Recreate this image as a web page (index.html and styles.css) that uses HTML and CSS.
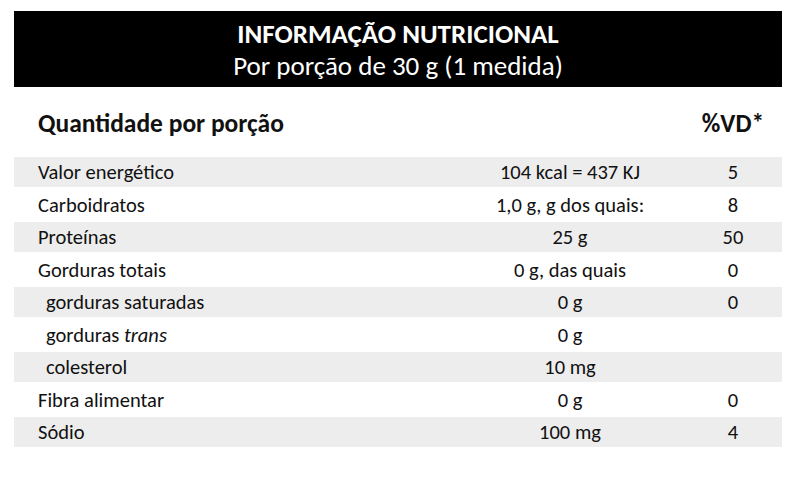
FILE: index.html
```html
<!DOCTYPE html>
<html lang="pt-BR">
<head>
<meta charset="utf-8">
<title>Informação Nutricional</title>
<link rel="stylesheet" href="styles.css">
</head>
<body>
<div class="page">
  <header class="banner">
    <div class="title">INFORMAÇÃO NUTRICIONAL</div>
    <div class="subtitle">Por porção de 30 g (1 medida)</div>
  </header>
  <div class="table">
    <div class="head label">Quantidade por porção</div>
    <div class="head value"></div>
    <div class="head vd">%VD*</div>

    <div class="cell label shade">Valor energético</div>
    <div class="cell value shade">104 kcal = 437 KJ</div>
    <div class="cell vd shade">5</div>

    <div class="cell label">Carboidratos</div>
    <div class="cell value">1,0 g, g dos quais:</div>
    <div class="cell vd">8</div>

    <div class="cell label shade">Proteínas</div>
    <div class="cell value shade">25 g</div>
    <div class="cell vd shade">50</div>

    <div class="cell label">Gorduras totais</div>
    <div class="cell value">0 g, das quais</div>
    <div class="cell vd">0</div>

    <div class="cell label sub shade">gorduras saturadas</div>
    <div class="cell value shade">0 g</div>
    <div class="cell vd shade">0</div>

    <div class="cell label sub"><span>gorduras <em>trans</em></span></div>
    <div class="cell value">0 g</div>
    <div class="cell vd"></div>

    <div class="cell label sub shade">colesterol</div>
    <div class="cell value shade">10 mg</div>
    <div class="cell vd shade"></div>

    <div class="cell label">Fibra alimentar</div>
    <div class="cell value">0 g</div>
    <div class="cell vd">0</div>

    <div class="cell label shade">Sódio</div>
    <div class="cell value shade">100 mg</div>
    <div class="cell vd shade">4</div>
  </div>
</div>
</body>
</html>
```

FILE: styles.css
```css
html, body {
  margin: 0;
  padding: 0;
  background: #ffffff;
}
body {
  font-family: "Carlito", "Liberation Sans Narrow", "Open Sans", sans-serif;
  color: #111111;
}
.page {
  width: 768px;
  padding: 11px 18px 0 14px;
}
.banner {
  background: #000000;
  color: #ffffff;
  height: 76px;
  display: flex;
  flex-direction: column;
  align-items: center;
  justify-content: center;
  box-sizing: border-box;
  padding-top: 1px;
}
.title {
  font-weight: bold;
  font-size: 27px;
  line-height: 31px;
}
.subtitle {
  font-size: 27px;
  line-height: 33px;
}
.table {
  display: grid;
  grid-template-columns: 456px 200px 112px;
  grid-template-rows: 70px repeat(4, 30px 35px) 30px;
}
.head {
  font-weight: bold;
  font-size: 25.5px;
  display: flex;
  align-items: center;
  padding-top: 3px;
}
.cell {
  font-size: 20.5px;
  display: flex;
  align-items: center;
}
.label {
  padding-left: 24px;
}
.label.sub {
  padding-left: 32px;
}
.value {
  justify-content: center;
}
.vd {
  justify-content: center;
  padding-left: 14px;
}
.shade {
  background: #ededed;
}
em {
  font-style: italic;
}
```
